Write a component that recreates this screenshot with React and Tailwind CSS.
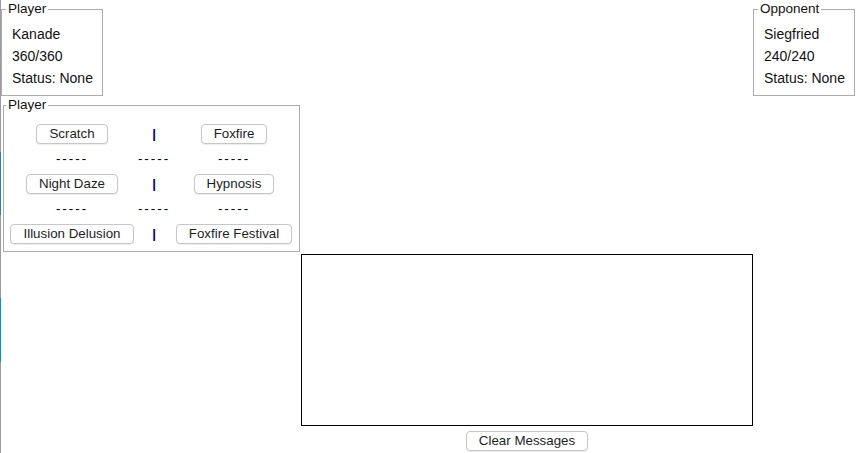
import React from 'react';

const moves = [
  ['Scratch', 'Foxfire'],
  ['Night Daze', 'Hypnosis'],
  ['Illusion Delusion', 'Foxfire Festival'],
];

function Btn({ children, className = '' }) {
  return (
    <button
      className={`flex h-[20px] items-center rounded-[4px] border border-[#c6c6c6] bg-white px-[12px] text-[13.33px] leading-none text-[#1e1e1e] shadow-[0_1px_1px_rgba(0,0,0,0.08)] ${className}`}
    >
      {children}
    </button>
  );
}

function InfoBox({ title, name, hp, className = '' }) {
  return (
    <fieldset className={`border border-[#ababab] pl-[4px] ${className}`}>
      <legend className="px-[2px] text-[13.5px] leading-[16px] text-[#111]">{title}</legend>
      <div className="pl-[6px] pt-[6px] pb-[6px] text-[14px] leading-[22px] text-[#111]">
        <div>{name}</div>
        <div>{hp}</div>
        <div>Status: None</div>
      </div>
    </fieldset>
  );
}

function Dashes() {
  return <span className="text-[13.33px] font-medium tracking-[2px] text-black">-----</span>;
}

export default function App() {
  return (
    <div className="flex h-[453px] w-[856px] overflow-hidden bg-white" style={{ fontFamily: '"Liberation Sans", Arial, sans-serif' }}>
      <div className="w-[1px] shrink-0 bg-[linear-gradient(to_bottom,#9b9b9b_152px,#2b7fb8_152px,#2b7fb8_215px,#9b9b9b_215px,#9b9b9b_298px,#0a94ad_298px,#0a94ad_362px,#9b9b9b_362px)]" />
      <div className="flex flex-1 flex-col">
        <div className="flex items-start justify-between">
          <InfoBox title="Player" name="Kanade" hp="360/360" className="mt-[1px] w-[102px]" />
          <InfoBox title="Opponent" name="Siegfried" hp="240/240" className="mt-[1px] mr-[1px] w-[102px]" />
        </div>

        <fieldset className="ml-[2px] mt-[1px] w-[297px] border border-[#ababab] pl-[2px]">
          <legend className="px-[2px] text-[13.5px] leading-[16px] text-[#111]">Player</legend>
          <div className="ml-[2px] grid grid-cols-[128px_36px_124px] pt-[8px] pb-[5px]">
            {moves.map(([a, b], i) => (
              <React.Fragment key={a}>
                <div className="flex h-[25px] items-center justify-center">
                  <Btn>{a}</Btn>
                </div>
                <div className="flex h-[25px] items-center justify-center text-[13.33px] font-bold text-[#000080]">|</div>
                <div className="flex h-[25px] items-center justify-center">
                  <Btn>{b}</Btn>
                </div>
                {i < moves.length - 1 && (
                  <>
                    <div className="flex h-[25px] items-center justify-center"><Dashes /></div>
                    <div className="flex h-[25px] items-center justify-center"><Dashes /></div>
                    <div className="flex h-[25px] items-center justify-center"><Dashes /></div>
                  </>
                )}
              </React.Fragment>
            ))}
          </div>
        </fieldset>

        <div className="ml-[300px] mt-[2px] flex w-[452px] flex-col items-center">
          <div className="h-[172px] w-full border border-black bg-white" />
          <Btn className="mt-[5px]">Clear Messages</Btn>
        </div>
      </div>
    </div>
  );
}
